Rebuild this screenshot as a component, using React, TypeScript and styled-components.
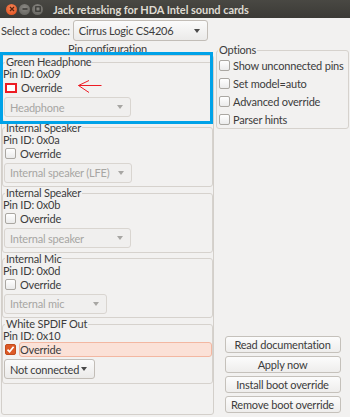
import styled, { createGlobalStyle, css } from "styled-components";

const GlobalStyle = createGlobalStyle`
  html, body { margin: 0; padding: 0; }
  body {
    background: #f2f1f0;
    font-family: Lato, "Liberation Sans", sans-serif;
    font-size: 11px;
    letter-spacing: -0.2px;
    color: #3c3c3c;
  }
  * { box-sizing: border-box; }
`;

type Pin = {
  name: string;
  id: string;
  value: string;
  width: number;
  checked?: boolean;
  marked?: boolean;
};

const pins: Pin[] = [
  { name: "Green Headphone", id: "0x09", value: "Headphone", width: 127, marked: true },
  { name: "Internal Speaker", id: "0x0a", value: "Internal speaker (LFE)", width: 128 },
  { name: "Internal Speaker", id: "0x0b", value: "Internal speaker", width: 127 },
  { name: "Internal Mic", id: "0x0d", value: "Internal mic", width: 103 },
  { name: "White SPDIF Out", id: "0x10", value: "Not connected", width: 91, checked: true },
];

const options = [
  "Show unconnected pins",
  "Set model=auto",
  "Advanced override",
  "Parser hints",
];

const actions = [
  "Read documentation",
  "Apply now",
  "Install boot override",
  "Remove boot override",
];

export default function App() {
  return (
    <>
      <GlobalStyle />
      <Window>
        <TitleBar>
          <WinButton $kind="close">
            <svg width="6" height="6" viewBox="0 0 6 6">
              <path d="M1 1 L5 5 M5 1 L1 5" stroke="#5a2410" strokeWidth="1.3" />
            </svg>
          </WinButton>
          <WinButton $kind="other">
            <svg width="6" height="6" viewBox="0 0 6 6">
              <path d="M0.5 3 H5.5" stroke="#33322f" strokeWidth="1.4" />
            </svg>
          </WinButton>
          <WinButton $kind="other">
            <svg width="6" height="6" viewBox="0 0 6 6">
              <rect x="0.8" y="0.8" width="4.4" height="4.4" fill="none" stroke="#33322f" strokeWidth="1.2" />
            </svg>
          </WinButton>
          <Title>Jack retasking for HDA Intel sound cards</Title>
        </TitleBar>

        <CodecRow>
          <span>Select a codec:</span>
          <Combo $width={135}>
            <span>Cirrus Logic CS4206</span>
            <Arrow />
          </Combo>
        </CodecRow>

        <Main>
          <LeftCol>
            <SectionTitle>Pin configuration</SectionTitle>
            <ScrollBox>
              {pins.map((p) => (
                <PinFrame key={p.id}>
                  <FrameLegend>{p.name}</FrameLegend>
                  <PinId>Pin ID: {p.id}</PinId>
                  <OverrideRow>
                    <Check $checked={p.checked} $marked={p.marked}>
                      {p.checked && (
                        <svg width="9" height="9" viewBox="0 0 9 9">
                          <path d="M1.5 4.6 L3.6 6.8 L7.6 1.8" fill="none" stroke="#fff" strokeWidth="1.7" />
                        </svg>
                      )}
                    </Check>
                    <CheckLabel $hover={p.checked}>Override</CheckLabel>
                    {p.marked && (
                      <Pointer width="24" height="14" viewBox="0 0 24 14">
                        <path d="M0.5 5.5 H23.5 M0.5 5.5 L11 0.5 M0.5 5.5 L11 12.5" fill="none" stroke="#ed1c24" strokeWidth="1" />
                      </Pointer>
                    )}
                  </OverrideRow>
                  <Combo $width={p.width} $disabled={!p.checked} $inFrame>
                    <span>{p.value}</span>
                    <Arrow $disabled={!p.checked} />
                  </Combo>
                </PinFrame>
              ))}
            </ScrollBox>
            <Highlight />
          </LeftCol>

          <RightCol>
            <OptionsFrame>
              <FrameLegend $options>Options</FrameLegend>
              {options.map((o) => (
                <OptionRow key={o}>
                  <Check />
                  <span>{o}</span>
                </OptionRow>
              ))}
            </OptionsFrame>
            <ButtonStack>
              {actions.map((a) => (
                <Button key={a}>{a}</Button>
              ))}
            </ButtonStack>
          </RightCol>
        </Main>
      </Window>
    </>
  );
}

const Window = styled.div`
  width: 350px;
  height: 417px;
  display: flex;
  flex-direction: column;
  background: #f2f1f0;
  overflow: hidden;
`;

const TitleBar = styled.div`
  height: 18px;
  flex: none;
  display: flex;
  align-items: center;
  padding-left: 6px;
  gap: 2px;
  background: linear-gradient(#494843, #3b3a36);
`;

const WinButton = styled.span<{ $kind: "close" | "other" }>`
  width: 11px;
  height: 11px;
  border-radius: 50%;
  display: flex;
  align-items: center;
  justify-content: center;
  ${(p) =>
    p.$kind === "close"
      ? css`
          background: radial-gradient(circle at 50% 35%, #f6875a, #df4a16);
        `
      : css`
          background: radial-gradient(circle at 50% 35%, #8c8a85, #5e5d58);
        `}
`;

const Title = styled.span`
  margin-left: 8px;
  color: #dfdbd2;
  font-weight: 700;
  font-size: 11px;
  letter-spacing: -0.05px;
  white-space: nowrap;
`;

const CodecRow = styled.div`
  height: 25px;
  flex: none;
  display: flex;
  align-items: center;
  gap: 3px;
  padding-left: 1px;
`;

const Combo = styled.div<{ $width: number; $disabled?: boolean; $inFrame?: boolean }>`
  width: ${(p) => p.$width}px;
  height: ${(p) => (p.$inFrame ? 20 : 21)}px;
  display: flex;
  align-items: center;
  padding: 0 7px 0 5px;
  border-radius: 3px;
  white-space: nowrap;
  ${(p) =>
    p.$inFrame &&
    css`
      margin: 2px 0 0 1px;
    `}
  ${(p) =>
    p.$disabled
      ? css`
          border: 1px solid #d9d5d0;
          background: #f0efee;
          color: #a7a6a3;
        `
      : css`
          border: 1px solid #c2bdb7;
          background: linear-gradient(#fbfbfb, #ebeae9);
          color: #3c3c3c;
        `}
`;

const Arrow = styled.span<{ $disabled?: boolean }>`
  margin-left: auto;
  width: 0;
  height: 0;
  border-left: 3.5px solid transparent;
  border-right: 3.5px solid transparent;
  border-top: 4px solid ${(p) => (p.$disabled ? "#a7a6a3" : "#4a4a4a")};
`;

const Main = styled.div`
  flex: 1;
  display: flex;
  padding: 0 1px 2px 1px;
  min-height: 0;
`;

const LeftCol = styled.div`
  width: 213px;
  flex: none;
  display: flex;
  flex-direction: column;
  position: relative;
`;

const SectionTitle = styled.div`
  height: 12px;
  line-height: 12px;
  text-align: center;
`;

const ScrollBox = styled.div`
  flex: 1;
  border: 1px solid #d3cfca;
  border-radius: 3px;
  overflow: hidden;
`;

const PinFrame = styled.fieldset`
  margin: 0;
  padding: 0 0 3.5px 0;
  min-width: 0;
  border: 1px solid #d6d2cd;
  border-radius: 3px;
  display: flex;
  flex-direction: column;
  align-items: flex-start;
`;

const FrameLegend = styled.legend<{ $options?: boolean }>`
  padding: 0 1px;
  margin-left: ${(p) => (p.$options ? 0 : 2)}px;
  line-height: 12px;
  height: 12px;
`;

const PinId = styled.div`
  height: 12px;
  line-height: 12px;
`;

const OverrideRow = styled.div`
  position: relative;
  align-self: stretch;
  height: 15px;
  display: flex;
  align-items: center;
  padding-left: 2px;
`;

const Check = styled.span<{ $checked?: boolean; $marked?: boolean }>`
  width: 11px;
  height: 11px;
  flex: none;
  border-radius: 2px;
  display: flex;
  align-items: center;
  justify-content: center;
  border: 1px solid #aaa7a2;
  background: linear-gradient(#ffffff, #ebebeb);
  ${(p) =>
    p.$checked &&
    css`
      border-color: #c24b1c;
      background: #dc5a27;
    `}
  ${(p) =>
    p.$marked &&
    css`
      width: 12px;
      height: 10px;
      border: 2px solid #ed1c24;
      border-radius: 0;
      background: #ffffff;
    `}
`;

const CheckLabel = styled.span<{ $hover?: boolean }>`
  margin-left: 3px;
  height: 15px;
  line-height: 13px;
  padding: 0 1px 0 0;
  border: 1px solid transparent;
  border-radius: 3px;
  ${(p) =>
    p.$hover &&
    css`
      flex: 1;
      margin-right: 0;
      background: #fbe1d7;
      border-color: #f3b7a1;
    `}
`;

const Pointer = styled.svg`
  position: absolute;
  left: 75px;
  top: 0px;
`;

const Highlight = styled.div`
  position: absolute;
  left: -1px;
  top: 9px;
  width: 213px;
  height: 72px;
  border: 3px solid #00a2e8;
  pointer-events: none;
`;

const RightCol = styled.div`
  flex: 1;
  margin-left: 2px;
  padding-top: 1px;
  display: flex;
  flex-direction: column;
`;

const OptionsFrame = styled.fieldset`
  margin: 0;
  padding: 0 0 0 1px;
  min-width: 0;
  border: 1px solid #d6d2cd;
  border-radius: 3px;
`;

const OptionRow = styled.div`
  height: 18px;
  display: flex;
  align-items: center;
  gap: 3px;
  padding-left: 1px;
  white-space: nowrap;
`;

const ButtonStack = styled.div`
  margin-top: auto;
  margin-bottom: 2px;
  display: flex;
  flex-direction: column;
  align-items: center;
  gap: 3px;
`;

const Button = styled.div`
  width: 116px;
  height: 17px;
  display: flex;
  align-items: center;
  justify-content: center;
  border: 1px solid #c5c1bb;
  border-radius: 3px;
  background: linear-gradient(#fcfcfc, #eeedec);
  white-space: nowrap;
`;
